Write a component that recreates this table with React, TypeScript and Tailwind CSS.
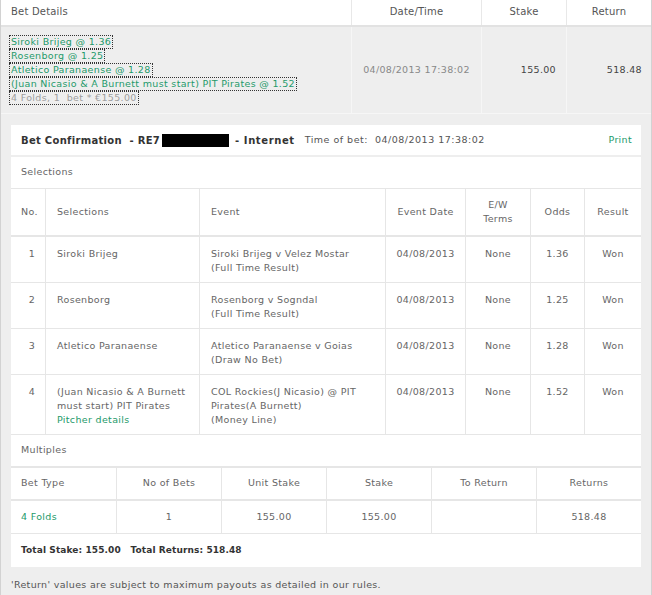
import React from 'react';

const font = { fontFamily: '"DejaVu Sans", Verdana, sans-serif' };

const picks = [
  'Siroki Brijeg @ 1.36',
  'Rosenborg @ 1.25',
  'Atletico Paranaense @ 1.28',
  '(Juan Nicasio & A Burnett must start) PIT Pirates @ 1.52',
];

const selections = [
  { no: 1, sel: ['Siroki Brijeg'], event: ['Siroki Brijeg v Velez Mostar', '(Full Time Result)'], odds: '1.36' },
  { no: 2, sel: ['Rosenborg'], event: ['Rosenborg v Sogndal', '(Full Time Result)'], odds: '1.25' },
  { no: 3, sel: ['Atletico Paranaense'], event: ['Atletico Paranaense v Goias', '(Draw No Bet)'], odds: '1.28' },
  {
    no: 4,
    sel: ['(Juan Nicasio & A Burnett', 'must start) PIT Pirates'],
    pitcher: true,
    event: ['COL Rockies(J Nicasio) @ PIT', 'Pirates(A Burnett)', '(Money Line)'],
    odds: '1.52',
  },
];

const selCols = 'grid grid-cols-[35px_154px_186px_80px_65px_54px_56px]';
const multiCols = 'grid grid-cols-[106px_105px_105px_105px_105px_104px]';

export default function App() {
  return (
    <div
      className="w-[652px] h-[595px] bg-[#eeeeee] border-x border-[#d2d2d2] text-[9.5px] tracking-[0.33px] text-[#666]"
      style={font}
    >
      {/* bet summary */}
      <div className="grid grid-cols-[351px_130px_85px_1fr] h-[27px] bg-white border-b-2 border-[#e2e2e2] text-[10px] tracking-[0.2px] text-[#555]">
        <div className="flex items-center pl-[10px] pb-[2px] border-r border-[#e8e8e8]">Bet Details</div>
        <div className="flex items-center justify-center pb-[2px] border-r border-[#e8e8e8]">Date/Time</div>
        <div className="flex items-center justify-center pb-[2px] border-r border-[#e8e8e8]">Stake</div>
        <div className="flex items-center justify-center pb-[2px]">Return</div>
      </div>
      <div className="grid grid-cols-[351px_130px_85px_1fr] h-[87px] border-b border-[#f6f6f6]">
        <div className="flex flex-col justify-center pl-[8px] border-r border-[#f6f6f6] leading-[11.5px]">
          {picks.map((p) => (
            <span key={p} className="block w-fit border border-dotted border-[#333] px-[1px] mb-[0.5px] text-[#1e9a6a]">
              {p}
            </span>
          ))}
          <span className="block w-fit border border-dotted border-[#333] px-[1px] text-[#a0a0a0]">
            4 Folds, 1&nbsp; bet * €155.00
          </span>
        </div>
        <div className="flex items-center justify-center border-r border-[#f6f6f6] text-[#888]">04/08/2013 17:38:02</div>
        <div className="flex items-center justify-end pr-[10px] border-r border-[#f6f6f6] text-[#444]">155.00</div>
        <div className="flex items-center justify-end pr-[9px] text-[#444]">518.48</div>
      </div>

      {/* confirmation panel */}
      <div className="mx-[10px] mt-[11px] bg-white">
        <div className="flex items-center h-[32px] pl-[10px] pr-[9px] border-b-2 border-[#eeeeee]">
          <span className="w-[144px] whitespace-nowrap font-bold text-[10px] tracking-[0.3px] text-[#333]">
            Bet Confirmation&nbsp; - RE7
          </span>
          <span className="inline-block w-[67px] h-[13px] bg-black -ml-[3px]" />
          <span className="font-bold text-[10px] tracking-[0.6px] text-[#333] ml-[6px]">- Internet</span>
          <span className="ml-[10px] tracking-[0.5px] text-[#555]">Time of bet:&nbsp; 04/08/2013 17:38:02</span>
          <span className="ml-auto text-[#1e9a6a]">Print</span>
        </div>
        <div className="flex items-center h-[32px] pl-[10px] border-b border-[#e6e6e6]">Selections</div>

        <div className={`${selCols} h-[48px] border-b-2 border-[#e6e6e6]`}>
          <div className="flex items-center pl-[10px] border-r border-[#e6e6e6]">No.</div>
          <div className="flex items-center pl-[11px] border-r border-[#e6e6e6]">Selections</div>
          <div className="flex items-center pl-[11px] border-r border-[#e6e6e6]">Event</div>
          <div className="flex items-center justify-center border-r border-[#e6e6e6]">Event Date</div>
          <div className="flex items-center justify-center text-center leading-[14px] border-r border-[#e6e6e6]">
            E/W
            <br />
            Terms
          </div>
          <div className="flex items-center justify-center border-r border-[#e6e6e6]">Odds</div>
          <div className="flex items-center justify-center">Result</div>
        </div>

        {selections.map((s) => (
          <div key={s.no} className={`${selCols} border-b border-[#e6e6e6] leading-[14px]`}>
            <div className="pt-[10px] pb-[7px] pr-[10px] text-right border-r border-[#e6e6e6]">{s.no}</div>
            <div className="pt-[10px] pb-[7px] pl-[11px] border-r border-[#e6e6e6]">
              {s.sel.map((l) => (
                <div key={l}>{l}</div>
              ))}
              {s.pitcher && <div className="text-[#1e9a6a]">Pitcher details</div>}
            </div>
            <div className="pt-[10px] pb-[7px] pl-[11px] border-r border-[#e6e6e6]">
              {s.event.map((l) => (
                <div key={l}>{l}</div>
              ))}
            </div>
            <div className="pt-[10px] text-center border-r border-[#e6e6e6]">04/08/2013</div>
            <div className="pt-[10px] text-center border-r border-[#e6e6e6]">None</div>
            <div className="pt-[10px] text-center border-r border-[#e6e6e6]">{s.odds}</div>
            <div className="pt-[10px] text-center">Won</div>
          </div>
        ))}

        <div className="flex items-center h-[33px] pl-[10px] border-b-2 border-[#e6e6e6]">Multiples</div>
        <div className={`${multiCols} h-[33px] border-b-2 border-[#e6e6e6]`}>
          <div className="flex items-center pl-[10px] border-r border-[#e6e6e6]">Bet Type</div>
          <div className="flex items-center justify-center border-r border-[#e6e6e6]">No of Bets</div>
          <div className="flex items-center justify-center border-r border-[#e6e6e6]">Unit Stake</div>
          <div className="flex items-center justify-center border-r border-[#e6e6e6]">Stake</div>
          <div className="flex items-center justify-center border-r border-[#e6e6e6]">To Return</div>
          <div className="flex items-center justify-center">Returns</div>
        </div>
        <div className={`${multiCols} h-[33px] border-b border-[#e6e6e6]`}>
          <div className="flex items-center pl-[10px] border-r border-[#e6e6e6] text-[#1e9a6a]">4 Folds</div>
          <div className="flex items-center justify-center border-r border-[#e6e6e6]">1</div>
          <div className="flex items-center justify-center border-r border-[#e6e6e6]">155.00</div>
          <div className="flex items-center justify-center border-r border-[#e6e6e6]">155.00</div>
          <div className="flex items-center justify-center border-r border-[#e6e6e6]"></div>
          <div className="flex items-center justify-center">518.48</div>
        </div>
        <div className="flex items-center h-[33px] pl-[10px] font-bold text-[9px] tracking-[0.1px] text-[#333]">
          Total Stake: 155.00&nbsp;&nbsp; Total Returns: 518.48
        </div>
      </div>

      <div className="pl-[10px] pt-[11px] text-[#555]">
        'Return' values are subject to maximum payouts as detailed in our rules.
      </div>
    </div>
  );
}
